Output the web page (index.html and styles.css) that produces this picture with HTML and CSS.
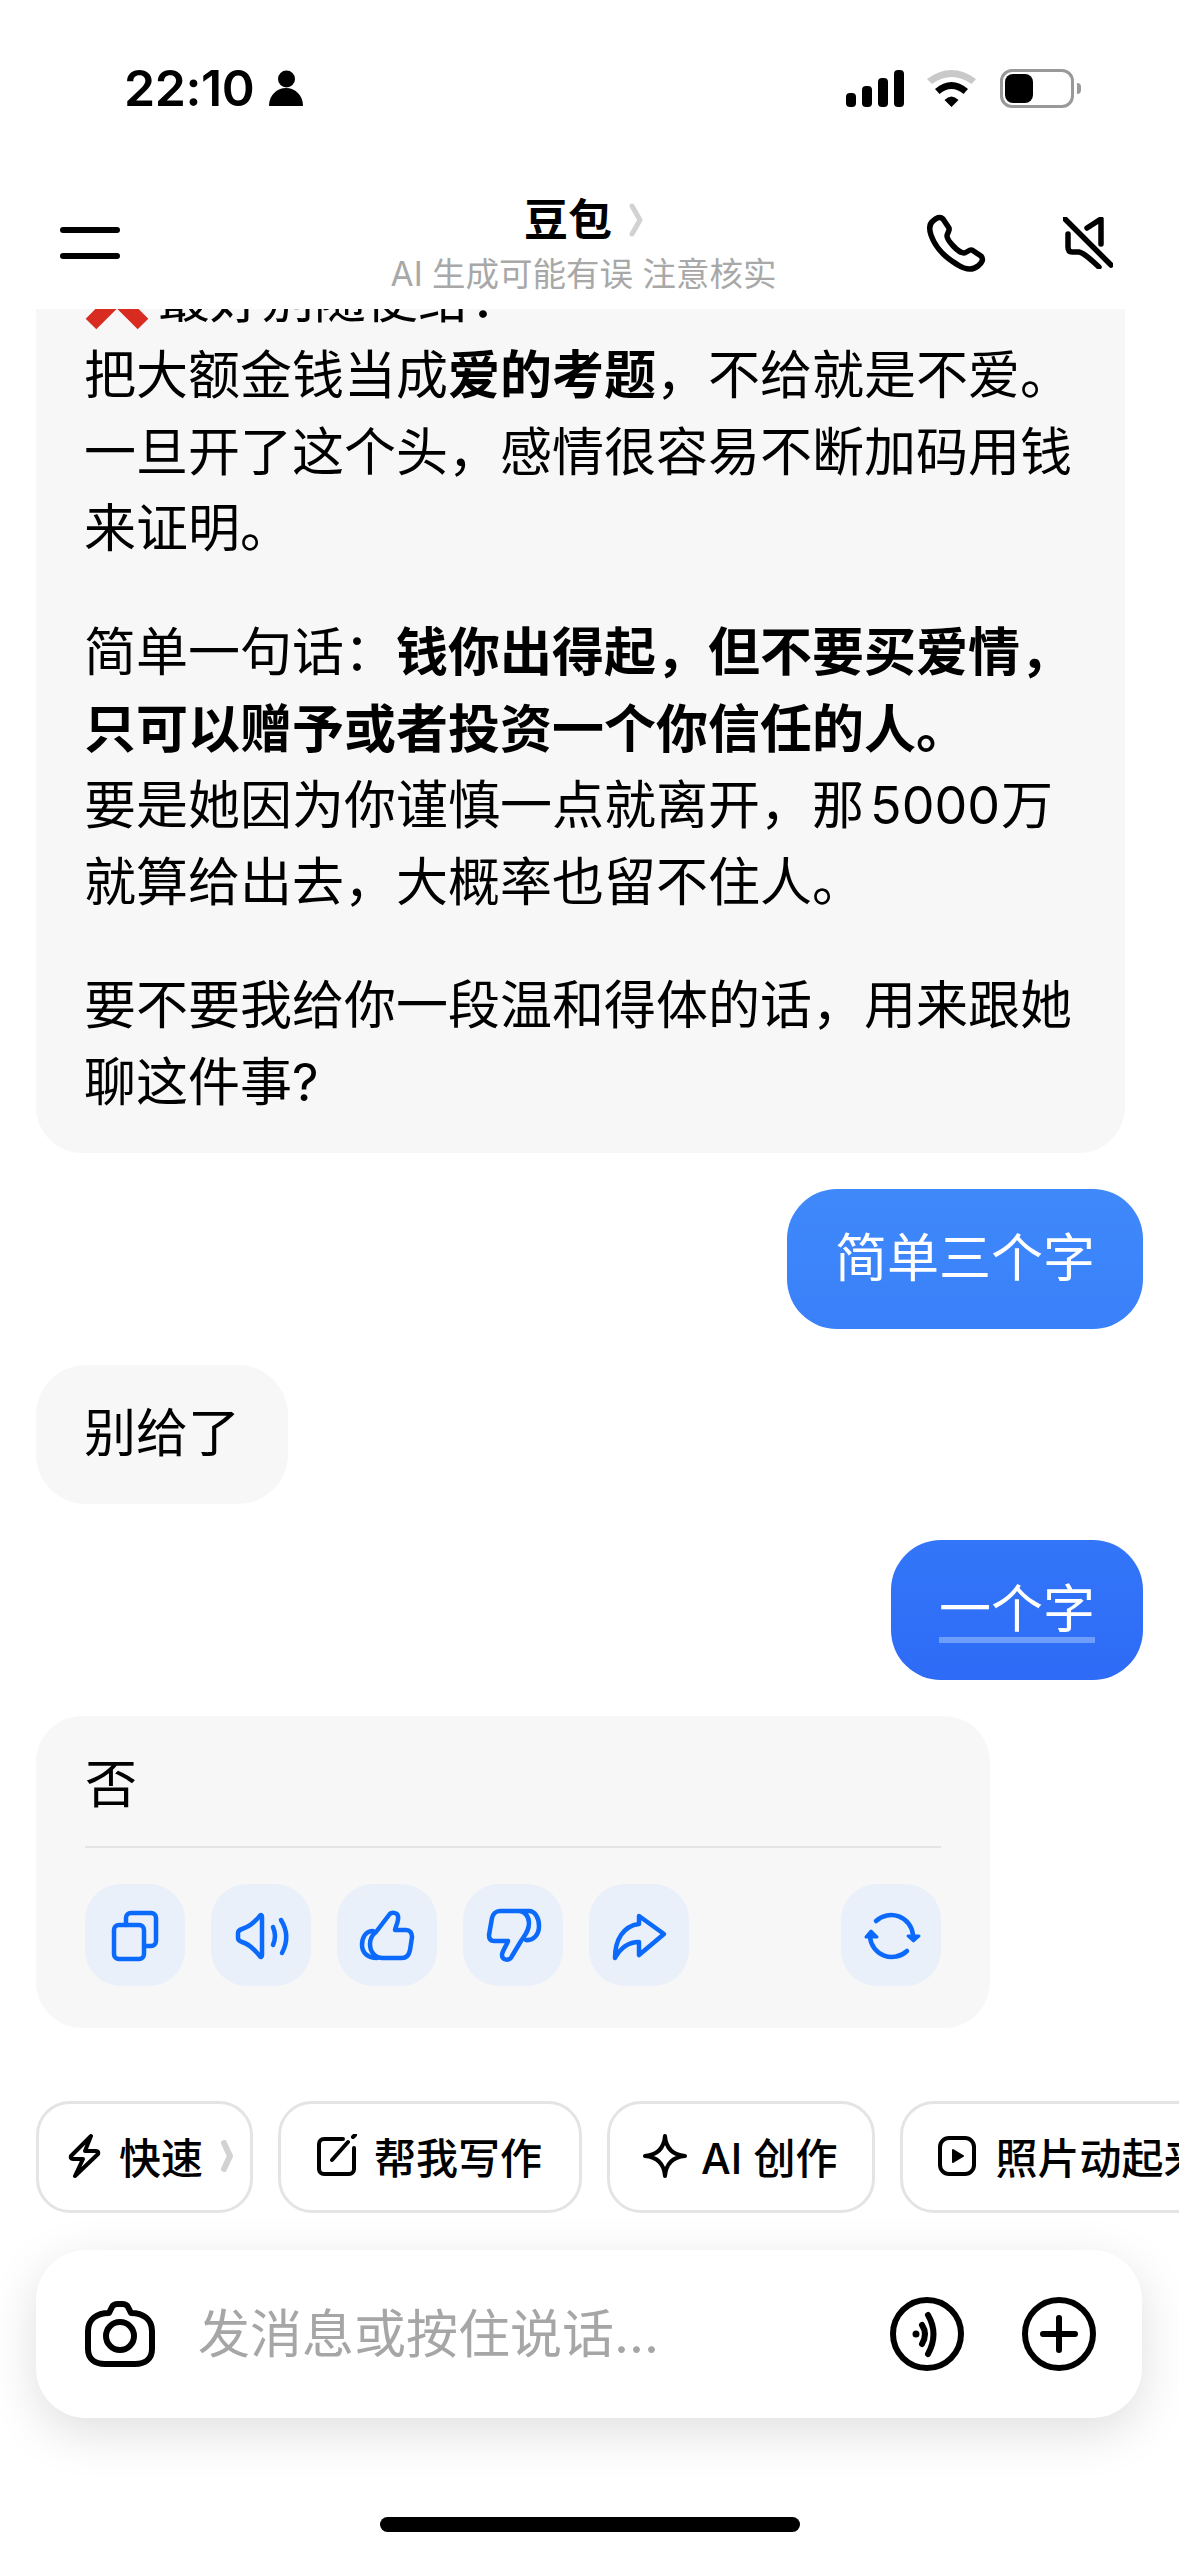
FILE: index.html
```html
<!DOCTYPE html>
<html lang="zh-CN">
<head>
<meta charset="utf-8">
<title>豆包</title>
<link rel="stylesheet" href="styles.css">
</head>
<body>
<div class="page">
  <div class="status">
    <div class="status-left">
      <span class="time">22:10</span>
      <svg class="person" viewBox="0 0 34 36"><circle cx="17.500" cy="9" r="8.500"/><path d="M0 36C0 25 8 18 17 18S34 25 34 36Z"/></svg>
    </div>
    <div class="status-right">
      <div class="signal"><i class="bar b1"></i><i class="bar b2"></i><i class="bar b3"></i><i class="bar b4"></i></div>
      <svg class="wifi" viewBox="0 0 49 37"><path class="wifi-off" d="M0 9Q24.500-9 49 9L44.500 14Q24.500 0 5 14Z"/><path d="M8 19Q24.500 5 41 19L36.500 24Q24.500 14 12.500 24Z"/><path d="M17.500 30Q24.500 23 31.500 30L24.500 37Z"/></svg>
      <div class="battery-wrap"><div class="battery"><div class="battery-fill"></div></div><div class="battery-tip"></div></div>
    </div>
  </div>

  <header class="header">
    <div class="menu"><i></i><i></i></div>
    <div class="title-block">
      <div class="title-row"><span class="title">豆包</span>
        <svg class="chev chev-title" viewBox="0 0 14 34"><path d="M3 3L11 17L3 31"/></svg>
      </div>
      <div class="subtitle">AI 生成可能有误 注意核实</div>
    </div>
    <div class="header-actions">
      <svg class="phone" viewBox="0 0 60 60"><path d="M7 8C10 5 14 3 17 6L23 15C24 18 21 20 21 23C21 27 32 40 38 40C41 40 43 36 46 37L55 43C58 46 56 50 52 53C47 57 40 57 32 52C20 45 9 34 5 22C3 16 3 11 7 8Z"/></svg>
      <svg class="mute" viewBox="0 0 50 52"><path d="M2 2L48 48M24 11L38 2V27M5 17V30C5 33 6 35 9 35H16C22 36 29 44 36 50"/></svg>
    </div>
  </header>

  <main class="chat">
    <div class="bubble ai ai-long">
      <p><svg class="cross" viewBox="0 0 66 66"><path d="M7 7L59 59M59 7L7 59"/></svg>最好别随便给：</p>
      <p>把大额金钱当成<b>爱的考题</b>，不给就是不爱。一旦开了这个头，感情很容易不断加码用钱来证明。</p>
      <p class="para">简单一句话：<b>钱你出得起，但不要买爱情，只可以赠予或者投资一个你信任的人。</b><br>要是她因为你谨慎一点就离开，那<span class="num">5000</span>万就算给出去，大概率也留不住人。</p>
      <p class="para">要不要我给你一段温和得体的话，用来跟她聊这件事?</p>
    </div>

    <div class="bubble user user-a">简单三个字</div>
    <div class="bubble ai ai-short">别给了</div>
    <div class="bubble user user-b"><span class="marked">一个字</span></div>

    <div class="bubble ai ai-card">
      <div class="answer">否</div>
      <div class="tools">
        <div class="tool"><svg viewBox="0 0 100 100"><rect x="29" y="40" width="30" height="34" rx="5"/><path d="M41 40V33A5 5 0 0 1 46 28H66A5 5 0 0 1 71 33V56A5 5 0 0 1 66 61H60"/></svg></div>
        <div class="tool"><svg viewBox="0 0 100 100"><path d="M49 30.500C44 37 38 42 31 44C28 45 27 46 27 48V53C27 55 28 56 31 57C38 59 44 65 49 71.500C50 72.500 51 72 51 70V32C51 30 50 29.500 49 30.500Z"/><path d="M62 42Q66 51 62 60M70 35Q80 51 71 68"/></svg></div>
        <div class="tool"><svg viewBox="0 0 100 100"><path d="M39 47L52 30C54 27 60 27 61 31C62 36 59 40 58 45H69C73 45 75 48 75 52L73 65C72 70 69 73 65 73H46C38 73 33 67 33 59C33 54 35 50 39 47Z"/><path d="M36 46C29 46 25 52 25 60C25 68 31 73 40 73"/></svg></div>
        <div class="tool"><svg viewBox="0 0 100 100"><path d="M37 26H56C62 26 66 32 66 38C66 46 62 50 58 56L49 71C47 76 39 76 39 70C39 66 43 62 45 56H31C27 56 26 53 26 50L29 33C30 29 33 26 37 26Z"/><path d="M58 26H66C72 26 76 33 76 41C76 50 70 56 63 55"/></svg></div>
        <div class="tool"><svg viewBox="0 0 100 100"><path d="M50 31L75 49L50 70V57C40 57 32 62 26 73C26 55 34 41 50 39Z"/></svg></div>
        <div class="tool tool-last"><svg viewBox="0 0 100 100"><path d="M35 36A22 22 0 0 1 72 50M66 66A22 22 0 0 1 29 52"/><path class="solid" d="M67 51H78L72.500 56ZM25 52H36L30 46Z"/></svg></div>
      </div>
    </div>
  </main>

  <div class="chips">
    <div class="chip chip-fast">
      <svg class="ic-bolt" viewBox="0 0 33 44"><path d="M23 2L3 22Q2 25 5 25H15L7 42L30 20Q31 17 28 17H17Z"/></svg>
      <span>快速</span>
      <svg class="chev chev-chip" viewBox="0 0 12 32"><path d="M3 3L9 16L3 29"/></svg>
    </div>
    <div class="chip">
      <svg class="ic" viewBox="0 0 44 44"><path d="M27 5H8A5 5 0 0 0 3 10V35A5 5 0 0 0 8 40H33A5 5 0 0 0 38 35V14M16 26L32 8M37 3L39 1"/></svg>
      <span>帮我写作</span>
    </div>
    <div class="chip chip-ai">
      <svg class="ic" viewBox="0 0 44 44"><path d="M22 2C23 14 30 21 42 22C30 23 23 30 22 42C21 30 14 23 2 22C14 21 21 14 22 2Z"/></svg>
      <span>AI 创作</span>
    </div>
    <div class="chip chip-play">
      <svg class="ic ic-play" viewBox="0 0 38 40"><rect x="2" y="2" width="34" height="36" rx="9"/><path class="solid" d="M15 14L25 20L15 26Z"/></svg>
      <span>照片动起来</span>
    </div>
  </div>

  <div class="composer">
    <svg class="camera" viewBox="0 0 70 66"><path d="M24 12L27 6C28 4 30 3 33 3H37C40 3 42 4 43 6L46 12C58 12 67 18 67 30V48C67 58 60 63 50 63H20C10 63 3 58 3 48V30C3 18 12 12 24 12Z"/><circle cx="35" cy="35" r="14"/></svg>
    <div class="placeholder">发消息或按住说话...</div>
    <svg class="round-ic" viewBox="0 0 74 74"><circle cx="37" cy="37" r="34"/><path d="M32 28Q38 37 32 47M38 18Q49 37 38 57"/><circle class="solid" cx="26" cy="37" r="2"/></svg>
    <svg class="round-ic" viewBox="0 0 74 74"><circle cx="37" cy="37" r="34"/><path d="M21 37H53M37 21V53"/></svg>
  </div>

  <div class="home-zone"><div class="home-bar"></div></div>
</div>
</body>
</html>
```
FILE: styles.css
```css
* { box-sizing: border-box; }
html, body { margin: 0; padding: 0; background: #fff; }
body { font-family: "Inter", "Noto Sans CJK SC", sans-serif; color: #000; }
p { margin: 0; }
svg { display: block; flex-shrink: 0; }

.page {
  width: 1179px;
  height: 2556px;
  display: flex;
  flex-direction: column;
  overflow: hidden;
  background: #fff;
}

/* status bar */
.status {
  height: 176px;
  flex-shrink: 0;
  display: flex;
  align-items: center;
  justify-content: space-between;
  padding: 0 98px 0 124px;
}
.status-left { display: flex; align-items: center; gap: 15px; }
.time { font-size: 50px; font-weight: 600; line-height: 50px; letter-spacing: -.4px; }
.person { width: 34px; height: 36px; fill: #000; }
.status-right { display: flex; align-items: center; }
.signal { display: flex; align-items: flex-end; gap: 6px; height: 37px; margin-right: 23px; }
.bar { width: 10px; background: #000; border-radius: 4px; display: block; }
.b1 { height: 14px; }
.b2 { height: 21px; }
.b3 { height: 29px; }
.b4 { height: 37px; }
.wifi { width: 49px; height: 37px; fill: #000; margin-right: 24px; }
.wifi-off { fill: #c9c9c9; }
.battery-wrap { display: flex; align-items: center; gap: 3px; }
.battery {
  width: 74px;
  height: 39px;
  border: 3px solid #999;
  border-radius: 12px;
  padding: 2px;
}
.battery-fill { width: 28px; height: 100%; background: #000; border-radius: 8px; }
.battery-tip { width: 4px; height: 11px; background: #999; border-radius: 0 4px 4px 0; }

/* header */
.header {
  height: 133px;
  flex-shrink: 0;
  display: grid;
  grid-template-columns: 1fr auto 1fr;
  align-items: center;
  padding: 0 66px 0 54px;
  background: #fff;
}
.menu { display: flex; flex-direction: column; gap: 20px; margin-left: 6px; }
.menu i { display: block; width: 60px; height: 6px; background: #000; border-radius: 3px; }
.title-block { display: flex; flex-direction: column; align-items: center; gap: 9px; padding-top: 3px; }
.title-row { display: flex; align-items: center; gap: 17px; height: 50px; }
.title { font-size: 44px; font-weight: 700; line-height: 50px; }
.chev { fill: none; stroke: #d2d2d2; stroke-linecap: round; stroke-linejoin: round; }
.chev-title { width: 14px; height: 34px; stroke-width: 5; }
.subtitle { font-size: 33.500px; line-height: 40px; color: #a8a8a8; white-space: nowrap; }
.header-actions { display: flex; justify-content: flex-end; align-items: center; gap: 77px; }
.phone { width: 60px; height: 60px; fill: none; stroke: #000; stroke-width: 5.500; stroke-linejoin: round; }
.mute { width: 50px; height: 52px; fill: none; stroke: #000; stroke-width: 5.500; stroke-linecap: round; stroke-linejoin: round; }

/* chat */
.chat {
  flex: 1;
  min-height: 0;
  overflow: hidden;
  display: flex;
  flex-direction: column;
  justify-content: flex-end;
  align-items: flex-start;
  gap: 36px;
  padding: 0 36px 73px;
}
.bubble {
  flex-shrink: 0;
  font-size: 52px;
  line-height: 76.600px;
  padding: 31px 48px;
  border-radius: 50px;
}
.ai { background: #f7f7f7; }
.ai-long { width: 1089px; padding: 31px 50px 31px 48px; border-radius: 46px; }
.cross { display: inline-block; width: 66px; height: 66px; margin-right: 8px; vertical-align: -13px; fill: none; stroke: #d92c20; stroke-width: 15; }
.para { margin-top: 47px; }
.num { margin: 0 1px 0 6px; }
b { font-weight: 700; }
.user { align-self: flex-end; color: #fff; padding: 32px 48px; }
.user-a { background: linear-gradient(#3f89fb, #3a80f9); }
.user-b { background: linear-gradient(#3376f9, #2e6bf6); }
.marked {
  display: inline-block;
  background: linear-gradient(#6e9dfb, #6e9dfb) left bottom 5px / 100% 6px no-repeat;
}
.ai-card { width: 954px; padding: 31px 49px 42px; border-radius: 46px; }
.answer { padding-bottom: 22px; border-bottom: 2px solid #e4e4e4; }
.tools { display: flex; gap: 26px; margin-top: 36px; }
.tool {
  width: 100px;
  height: 102px;
  border-radius: 36px;
  background: #e9f0f9;
  display: flex;
  align-items: center;
  justify-content: center;
}
.tool-last { margin-left: auto; }
.tool svg { width: 100px; height: 100px; fill: none; stroke: #0b6afb; stroke-width: 4.500; stroke-linecap: round; stroke-linejoin: round; }
.tool .solid { fill: #0b6afb; stroke-width: 3; }

/* chips */
.chips {
  flex-shrink: 0;
  display: flex;
  gap: 25px;
  padding-left: 36px;
  overflow: hidden;
}
.chip {
  flex-shrink: 0;
  height: 112px;
  display: flex;
  align-items: center;
  gap: 14px;
  padding: 0 37px 3px 35px;
  border: 3px solid #e4e4e4;
  border-radius: 34px;
  font-size: 42px;
  font-weight: 500;
  white-space: nowrap;
}
.chip-fast { padding: 0 17px 3px 29px; gap: 18px; }
.chip-ai { padding: 0 35px 3px 33px; }
.chip-play { gap: 19px; }
.ic, .ic-bolt { fill: none; stroke: #000; stroke-width: 4; stroke-linecap: round; stroke-linejoin: round; }
.ic { width: 44px; height: 44px; }
.ic-bolt { width: 33px; height: 44px; }
.ic-play { width: 38px; height: 40px; }
.ic .solid { fill: #000; stroke-width: 2; }
.chev-chip { width: 12px; height: 32px; stroke-width: 6; }

/* composer */
.composer {
  flex-shrink: 0;
  height: 168px;
  margin: 37px 37px 0 36px;
  padding: 0 46px 0 49px;
  display: flex;
  align-items: center;
  background: #fff;
  border-radius: 50px;
  box-shadow: 0 14px 50px rgba(0, 0, 0, .13);
}
.camera { width: 70px; height: 66px; margin-right: 43px; fill: none; stroke: #000; stroke-width: 6; stroke-linejoin: round; }
.placeholder { flex: 1; font-size: 52px; line-height: 70px; padding-top: 2px; color: #a6a6a6; white-space: nowrap; }
.round-ic { width: 74px; height: 74px; fill: none; stroke: #000; stroke-width: 6; stroke-linecap: round; }
.round-ic + .round-ic { margin-left: 58px; }
.round-ic .solid { fill: #000; stroke-width: 3; }

/* home indicator */
.home-zone { flex-shrink: 0; padding: 99px 0 24px; display: flex; justify-content: center; }
.home-bar { width: 420px; height: 15px; border-radius: 8px; background: #000; }
```
